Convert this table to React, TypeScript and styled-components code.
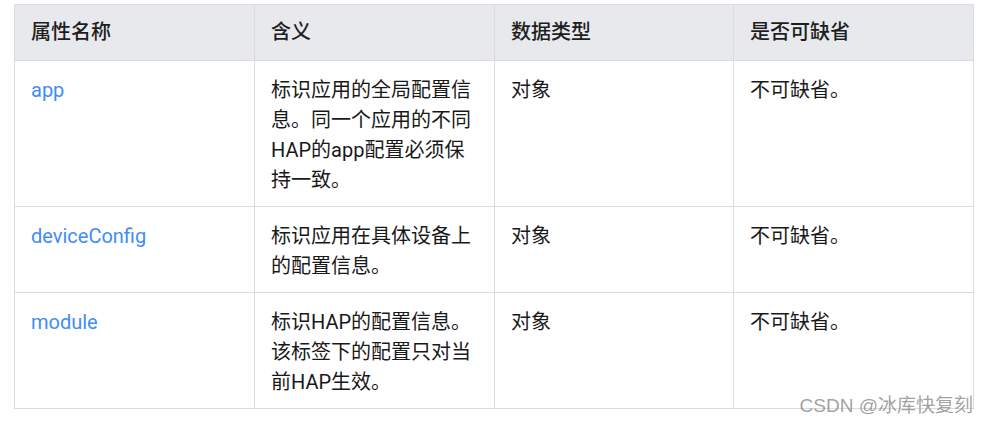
import * as React from "react";
import styled, { createGlobalStyle } from "styled-components";

const GlobalStyle = createGlobalStyle`
  html, body {
    margin: 0;
    padding: 0;
    background: #ffffff;
  }
  body {
    font-family: Roboto, "Noto Sans CJK SC", sans-serif;
  }
`;

const Page = styled.div`
  position: relative;
  width: 988px;
  height: 424px;
  padding: 4px 0 0 14px;
  box-sizing: border-box;
`;

const Table = styled.table`
  width: 960px;
  border-collapse: collapse;
  table-layout: fixed;
  font-size: 20px;
  line-height: 30px;
  color: #191919;
`;

const HeadCell = styled.th`
  background: #e8e9ec;
  border: 1px solid #dcdcdc;
  padding: 12px 16px 13px;
  text-align: left;
  font-weight: 500;
  color: #1e1e1e;
`;

const Cell = styled.td`
  border: 1px solid #dcdcdc;
  padding: 14px 16px 11px;
  vertical-align: top;
  word-break: break-all;
`;

const Link = styled.a`
  color: #3f8df5;
  text-decoration: none;
`;

const Watermark = styled.div`
  position: absolute;
  right: 15px;
  bottom: 7px;
  font-size: 19px;
  line-height: 22px;
  color: rgba(120, 120, 120, 0.7);
  font-family: Arial, "Liberation Sans", "Noto Sans CJK SC", sans-serif;
`;

type Row = { name: string; meaning: string; type: string; optional: string };

const rows: Row[] = [
  {
    name: "app",
    meaning: "标识应用的全局配置信息。同一个应用的不同HAP的app配置必须保持一致。",
    type: "对象",
    optional: "不可缺省。",
  },
  {
    name: "deviceConfig",
    meaning: "标识应用在具体设备上的配置信息。",
    type: "对象",
    optional: "不可缺省。",
  },
  {
    name: "module",
    meaning: "标识HAP的配置信息。该标签下的配置只对当前HAP生效。",
    type: "对象",
    optional: "不可缺省。",
  },
];

const App: React.FC = () => {
  return (
    <Page>
      <GlobalStyle />
      <Table>
        <colgroup>
          <col style={{ width: 240 }} />
          <col style={{ width: 240 }} />
          <col style={{ width: 239 }} />
          <col style={{ width: 240 }} />
        </colgroup>
        <thead>
          <tr>
            <HeadCell>属性名称</HeadCell>
            <HeadCell>含义</HeadCell>
            <HeadCell>数据类型</HeadCell>
            <HeadCell>是否可缺省</HeadCell>
          </tr>
        </thead>
        <tbody>
          {rows.map((r) => (
            <tr key={r.name}>
              <Cell>
                <Link href="#">{r.name}</Link>
              </Cell>
              <Cell>{r.meaning}</Cell>
              <Cell>{r.type}</Cell>
              <Cell>{r.optional}</Cell>
            </tr>
          ))}
        </tbody>
      </Table>
      <Watermark>CSDN @冰库快复刻</Watermark>
    </Page>
  );
};

export default App;
